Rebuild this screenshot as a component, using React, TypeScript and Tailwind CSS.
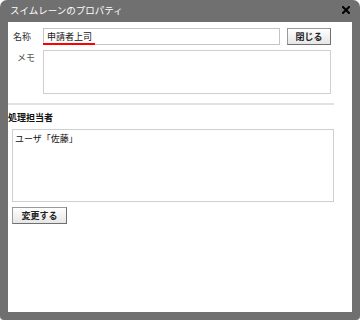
import React from "react"

const font = { fontFamily: '"Noto Sans CJK JP", "Noto Sans", sans-serif' }

function Button({ label, className = "" }: { label: string; className?: string }) {
  return (
    <button
      className={`h-[17px] flex items-center justify-center border border-[#9a9a9a] border-r-[#6f6f6f] border-b-[#6f6f6f] bg-gradient-to-b from-white to-[#e6e6e6] text-[9px] leading-none text-[#222] font-bold ${className}`}
    >
      {label}
    </button>
  )
}

export default function App() {
  return (
    <div className="w-[360px] h-[320px] bg-white" style={font}>
      <div className="w-full h-full bg-[#707070] rounded-t-[7px] rounded-b-[4px] flex flex-col">
        {/* Title bar */}
        <div className="h-[22px] flex items-center justify-between pl-[10px] pr-[10px]">
          <span className="text-white text-[9.5px] leading-none">スイムレーンのプロパティ</span>
          <svg width="8" height="8" viewBox="0 0 8 8" className="mt-[-2px]">
            <path d="M1 1 L7 7 M7 1 L1 7" stroke="#000" strokeWidth="2" strokeLinecap="square" />
          </svg>
        </div>

        {/* Body */}
        <div className="flex-1 mx-[8px] mb-[8px] bg-white flex flex-col pt-[6px] text-[9px] leading-none">
          <div className="flex items-center h-[17px]">
            <span className="w-[35px] pl-[5px] text-[#333]">名称</span>
            <div className="relative w-[237px] h-[17px] border border-[#c4c4c4] flex items-center pl-[3px]">
              <span className="text-[#111]">申請者上司</span>
              <div className="absolute left-[-1px] bottom-[-1px] w-[52px] h-[2px] bg-[#ff0000]" />
            </div>
            <Button label="閉じる" className="ml-[7px] w-[44px]" />
          </div>

          <div className="flex mt-[5px]">
            <span className="w-[35px] pl-[9px] pt-[3px] text-[#555]">メモ</span>
            <div className="w-[288px] h-[44px] border border-[#cfcfcf]" />
          </div>

          <div className="mt-[9px] w-[326px] h-[2px] bg-[#e2e2e2]" />

          <div className="mt-[8px] font-bold text-[#111]">処理担当者</div>

          <div className="mt-[7px] ml-[4px] w-[322px] h-[73px] border border-[#cfcfcf] pl-[2px] pt-[4px] text-[#111]">
            ユーザ「佐藤」
          </div>

          <Button label="変更する" className="mt-[5px] ml-[4px] w-[55px]" />
        </div>
      </div>
    </div>
  )
}
